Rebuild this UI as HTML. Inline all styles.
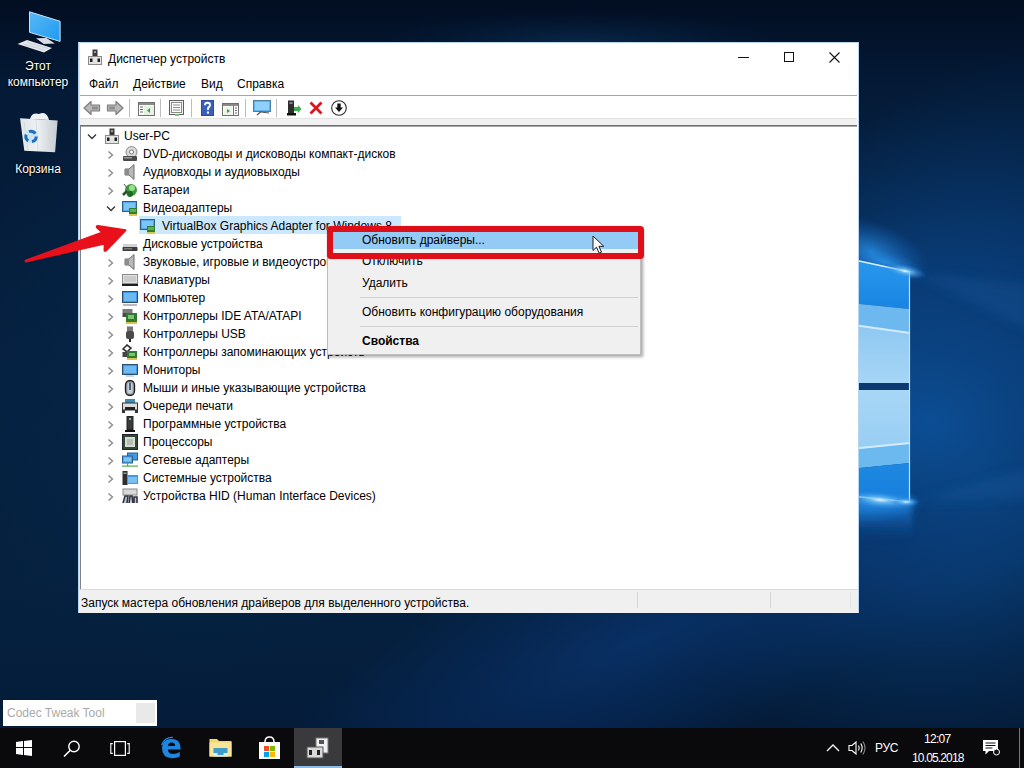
<!DOCTYPE html>
<html><head><meta charset="utf-8">
<style>
*{margin:0;padding:0;box-sizing:border-box}
html,body{width:1024px;height:768px;overflow:hidden;background:#04122a;font-family:"Liberation Sans",sans-serif;font-size:12px;color:#000}
.abs{position:absolute}
#desk{position:absolute;left:0;top:0;width:1024px;height:728px;overflow:hidden}
.dtxt{position:absolute;color:#fff;font-size:12px;text-align:center;line-height:15px;text-shadow:0 0 2px #000,0 1px 1px #000}
.tt{position:absolute;height:18px;line-height:18px;white-space:nowrap;color:#000}
#win{position:absolute;left:78px;top:42px;width:781px;height:571px;background:#fff;border:1px solid #b8d4ee}
.mi{position:absolute;line-height:16px;white-space:nowrap}
.sep{position:absolute;width:1px;background:#bdbdbd}
#ctx{position:absolute;left:327px;top:228px;width:314px;height:127px;background:#f0f0f0;border:1px solid #bdbdbd;box-shadow:2px 2px 3px rgba(0,0,0,0.35)}
#taskbar{position:absolute;left:0;top:728px;width:1024px;height:40px;background:#0a0a0c}
.tb{position:absolute;color:#fff;white-space:nowrap}
</style></head><body>
<div id="desk">
<svg width="1024" height="728" viewBox="0 0 1024 728" style="position:absolute;left:0;top:0">
 <defs>
  <linearGradient id="bg" x1="0" y1="0" x2="0" y2="1">
   <stop offset="0" stop-color="#020e22"/>
   <stop offset="0.12" stop-color="#041a36"/>
   <stop offset="0.5" stop-color="#05203e"/>
   <stop offset="0.8" stop-color="#05213f"/>
   <stop offset="1" stop-color="#041c3a"/>
  </linearGradient>
  <radialGradient id="glow1" cx="930" cy="420" r="1" gradientUnits="userSpaceOnUse" gradientTransform="translate(930 420) scale(360 330) translate(-930 -420)">
   <stop offset="0" stop-color="#0c4f96" stop-opacity="1"/>
   <stop offset="0.5" stop-color="#0a4282" stop-opacity="0.7"/>
   <stop offset="1" stop-color="#06305f" stop-opacity="0"/>
  </radialGradient>
  <radialGradient id="glow2" cx="640" cy="640" r="1" gradientUnits="userSpaceOnUse" gradientTransform="translate(640 640) rotate(-22) scale(380 120) translate(-640 -640)">
   <stop offset="0" stop-color="#0a3672" stop-opacity="0.75"/>
   <stop offset="0.6" stop-color="#08306a" stop-opacity="0.35"/>
   <stop offset="1" stop-color="#08306a" stop-opacity="0"/>
  </radialGradient>
  <radialGradient id="glow3" cx="200" cy="380" r="1" gradientUnits="userSpaceOnUse" gradientTransform="translate(200 380) scale(260 300) translate(-200 -380)">
   <stop offset="0" stop-color="#062850" stop-opacity="0.7"/>
   <stop offset="1" stop-color="#062850" stop-opacity="0"/>
  </radialGradient>
  <radialGradient id="glow4" cx="1010" cy="260" r="1" gradientUnits="userSpaceOnUse" gradientTransform="translate(1010 260) rotate(-30) scale(260 200) translate(-1010 -260)">
   <stop offset="0" stop-color="#0a3f7e" stop-opacity="0.45"/>
   <stop offset="1" stop-color="#0a3f7e" stop-opacity="0"/>
  </radialGradient>
  <linearGradient id="pane1" x1="0" y1="261" x2="0" y2="382" gradientUnits="userSpaceOnUse">
   <stop offset="0" stop-color="#3aa2f2"/>
   <stop offset="0.35" stop-color="#1f8ae6"/>
   <stop offset="0.38" stop-color="#5cb0ee"/>
   <stop offset="0.52" stop-color="#78bff1"/>
   <stop offset="0.56" stop-color="#b8e0f8"/>
   <stop offset="0.6" stop-color="#92cbf3"/>
   <stop offset="1" stop-color="#a4d4f5"/>
  </linearGradient>
  <linearGradient id="pane2" x1="0" y1="389" x2="0" y2="503" gradientUnits="userSpaceOnUse">
   <stop offset="0" stop-color="#a6d5f5"/>
   <stop offset="0.45" stop-color="#98cdf3"/>
   <stop offset="0.5" stop-color="#c4e6fa"/>
   <stop offset="0.54" stop-color="#7cc0f0"/>
   <stop offset="0.7" stop-color="#5aacec"/>
   <stop offset="0.73" stop-color="#2c8ae2"/>
   <stop offset="1" stop-color="#1c7ed8"/>
  </linearGradient>
  <radialGradient id="cglow" cx="0.5" cy="0.5" r="0.5">
   <stop offset="0" stop-color="#e8f6ff" stop-opacity="1"/>
   <stop offset="0.25" stop-color="#7cc8fa" stop-opacity="0.8"/>
   <stop offset="1" stop-color="#1a7fe0" stop-opacity="0"/>
  </radialGradient>
  <radialGradient id="haze" cx="0.5" cy="0.5" r="0.5">
   <stop offset="0" stop-color="#2b9af0" stop-opacity="0.75"/>
   <stop offset="1" stop-color="#1a6fd0" stop-opacity="0"/>
  </radialGradient>
 </defs>
 <rect width="1024" height="728" fill="url(#bg)"/>
 <rect width="1024" height="728" fill="url(#glow3)"/>
 <rect width="1024" height="728" fill="url(#glow1)"/>
 <rect width="1024" height="728" fill="url(#glow4)"/>
 <rect width="1024" height="728" fill="url(#glow2)"/>
 <ellipse cx="580" cy="42" rx="200" ry="30" fill="url(#haze)" opacity="0.18"/>
 <ellipse cx="872" cy="252" rx="60" ry="30" fill="url(#haze)" transform="rotate(20 872 252)"/>
 <ellipse cx="885" cy="262" rx="40" ry="12" fill="url(#haze)" transform="rotate(14 885 262)"/>
 <ellipse cx="875" cy="505" rx="50" ry="18" fill="url(#haze)" transform="rotate(-5 875 505)"/>
 <filter id="blur3" x="-20%" y="-20%" width="140%" height="140%"><feGaussianBlur stdDeviation="3"/></filter>
 <filter id="blur6" x="-20%" y="-50%" width="140%" height="200%"><feGaussianBlur stdDeviation="6"/></filter>
 <g filter="url(#blur6)">
 <polygon points="910,272 1030,284 1030,330" fill="#3a8fe0" opacity="0.10"/>
 <polygon points="910,502 1030,468 1030,498" fill="#3a8fe0" opacity="0.10"/>
 </g>
 <!-- logo panes -->
 <defs>
  <linearGradient id="pA" x1="0" y1="259" x2="0" y2="310" gradientUnits="userSpaceOnUse"><stop offset="0" stop-color="#2a98ee"/><stop offset="1" stop-color="#1884e2"/></linearGradient>
  <linearGradient id="pC" x1="0" y1="325" x2="0" y2="382" gradientUnits="userSpaceOnUse"><stop offset="0" stop-color="#8ec8f2"/><stop offset="1" stop-color="#a6d5f5"/></linearGradient>
  <linearGradient id="qA" x1="0" y1="389" x2="0" y2="449" gradientUnits="userSpaceOnUse"><stop offset="0" stop-color="#a8d7f6"/><stop offset="1" stop-color="#98cef3"/></linearGradient>
  <linearGradient id="qC" x1="0" y1="462" x2="0" y2="502" gradientUnits="userSpaceOnUse"><stop offset="0" stop-color="#1e88e2"/><stop offset="1" stop-color="#177fdc"/></linearGradient>
 </defs>
 <polygon points="850,259 910,272 910,309 850,303" fill="url(#pA)"/>
 <polygon points="850,303 910,309 910,333 850,324" fill="#6cb8ef"/>
 <polygon points="850,324 910,333 910,383 850,383" fill="url(#pC)"/>
 <line x1="850" y1="324.5" x2="910" y2="333" stroke="#d2ecfd" stroke-width="1.8"/>
 <rect x="850" y="383" width="60" height="7" fill="#0a3a70"/>
 <polygon points="850,390 910,390 910,443 850,449" fill="url(#qA)"/>
 <polygon points="850,449 910,443 910,463 850,469" fill="#6cb9ef"/>
 <line x1="850" y1="449" x2="910" y2="443" stroke="#d2ecfd" stroke-width="1.8"/>
 <polygon points="850,469 910,463 910,502 850,496" fill="url(#qC)"/>
 <defs><linearGradient id="below" x1="0" y1="496" x2="0" y2="540" gradientUnits="userSpaceOnUse"><stop offset="0" stop-color="#2a94ea" stop-opacity="0.95"/><stop offset="0.4" stop-color="#1a78d0" stop-opacity="0.6"/><stop offset="1" stop-color="#0d4a90" stop-opacity="0"/></linearGradient></defs>
 <rect x="846" y="498" width="66" height="44" fill="url(#below)" filter="url(#blur3)"/>
 <line x1="850" y1="259" x2="910" y2="272" stroke="#d9f1ff" stroke-width="1.6"/>
 <line x1="850" y1="496" x2="910" y2="502" stroke="#b9e2ff" stroke-width="1.4"/>
 <line x1="909.5" y1="271" x2="909.5" y2="503" stroke="#bfe4ff" stroke-width="1.2"/>
 <ellipse cx="905" cy="271" rx="22" ry="7" fill="url(#cglow)" transform="rotate(12 905 271)"/>
 <ellipse cx="880" cy="500" rx="38" ry="9" fill="url(#cglow)" transform="rotate(6 880 500)"/>
 <ellipse cx="906" cy="502" rx="14" ry="5" fill="url(#cglow)"/>
</svg>
</div>

<!-- Desktop icons -->
<svg class="abs" style="left:14px;top:8px" width="50" height="48" viewBox="0 0 50 48">
 <defs><linearGradient id="scr" x1="0" y1="0" x2="1" y2="1"><stop offset="0" stop-color="#5ab8f6"/><stop offset="1" stop-color="#1e9af0"/></linearGradient></defs>
 <polygon points="15.5,3.8 46.1,13.3 46.1,33.4 15.5,24.3" fill="url(#scr)" stroke="#c4e6fb" stroke-width="1"/>
 <polygon points="22,30.2 32.4,29.9 40.9,35.4 29.8,36" fill="#d9dde3"/>
 <polygon points="3.5,36 13,32 38,40 30,44.5" fill="#e4e8ec"/>
 <path d="M9 36 L31 42 M13 34.5 L34 40.5" stroke="#b8bec6" stroke-width="0.6"/>
</svg>
<div class="dtxt" style="left:0;top:58px;width:76px;line-height:16px">Этот<br>компьютер</div>
<svg class="abs" style="left:18px;top:110px" width="44" height="46" viewBox="0 0 44 46">
 <defs><linearGradient id="binG" x1="0" y1="0" x2="1" y2="0"><stop offset="0" stop-color="#dfe4e8"/><stop offset="0.45" stop-color="#eef1f3"/><stop offset="1" stop-color="#c6ccd2"/></linearGradient></defs>
 <path d="M12 9 Q14 2 21 4 Q27 1 30 7 L31 10 Z" fill="#eef2f5"/>
 <polygon points="2,8.2 39.6,10.4 37.1,42.2 6.3,40.8" fill="url(#binG)"/>
 <path d="M6 12 L10 40 M30 12 L32 40 M18 10 L20 41" stroke="#d2d8dd" stroke-width="0.8"/>
 <circle cx="13" cy="26.5" r="7" fill="#bfe0f6" opacity="0.7"/>
 <circle cx="13" cy="26.5" r="5.2" fill="none" stroke="#1d6fbd" stroke-width="3" stroke-dasharray="7 3.9"/>
</svg>
<div class="dtxt" style="left:0;top:162px;width:76px">Корзина</div>

<!-- Device manager window -->
<div id="win"></div>

<!-- title -->
<svg class="abs" style="left:88px;top:49px" width="14" height="16" viewBox="0 0 14 16">
 <rect x="4.5" y="0.5" width="5" height="7" fill="#3b3b3b"/><rect x="6" y="2" width="2" height="2" fill="#999"/>
 <rect x="0.5" y="7.5" width="13" height="8" fill="#e4e4e4" stroke="#8a8a8a"/>
 <rect x="2" y="9.5" width="2.5" height="3.5" fill="#1e1e1e"/><rect x="9.5" y="9.5" width="2.5" height="3.5" fill="#1e1e1e"/>
</svg>
<div class="abs" style="left:108px;top:51px;line-height:16px;white-space:nowrap">Диспетчер устройств</div>
<div class="abs" style="left:738px;top:57px;width:11px;height:1px;background:#111"></div>
<div class="abs" style="left:784px;top:52px;width:10px;height:10px;border:1px solid #111"></div>
<svg class="abs" style="left:829px;top:52px" width="12" height="12" viewBox="0 0 12 12"><path d="M0.5 0.5 L10.5 10.5 M10.5 0.5 L0.5 10.5" stroke="#111" stroke-width="1.1"/></svg>
<!-- menu -->
<div class="mi" style="left:89px;top:76px">Файл</div>
<div class="mi" style="left:133px;top:76px">Действие</div>
<div class="mi" style="left:201px;top:76px">Вид</div>
<div class="mi" style="left:237px;top:76px">Справка</div>
<div class="abs" style="left:79px;top:95px;width:778px;height:1px;background:#a6a6a6"></div>
<!-- toolbar -->
<div class="abs" style="left:79px;top:96px;width:779px;height:23px;background:#fff"></div>
<div class="abs" style="left:79px;top:118px;width:778px;height:1px;background:#e2e2e2"></div>
<div class="abs" style="left:79px;top:119px;width:778px;height:6px;background:#f1f1f1"></div>
<div class="abs" style="left:79px;top:125px;width:778px;height:1px;background:#6e6e6e"></div>
<div class="abs" style="left:79px;top:126px;width:778px;height:1px;background:#a8a8a8"></div>

<svg class="abs" style="left:83px;top:100px" width="18" height="16" viewBox="0 0 18 16"><path d="M1 8 L8 1.5 L8 5 L16.5 5 L16.5 11 L8 11 L8 14.5 Z" fill="#b9b9b9" stroke="#7d7d7d" stroke-width="1.2" stroke-linejoin="round"/><rect x="9" y="6.5" width="6" height="3" fill="#8f8f8f"/></svg>
<svg class="abs" style="left:106px;top:100px" width="18" height="16" viewBox="0 0 18 16"><path d="M17 8 L10 1.5 L10 5 L1.5 5 L1.5 11 L10 11 L10 14.5 Z" fill="#b9b9b9" stroke="#7d7d7d" stroke-width="1.2" stroke-linejoin="round"/><rect x="3" y="6.5" width="6" height="3" fill="#8f8f8f"/></svg>
<div class="sep" style="left:129px;top:99px;height:18px"></div>
<svg class="abs" style="left:138px;top:102px" width="17" height="14" viewBox="0 0 17 14"><rect x="0.5" y="0.5" width="16" height="13" fill="#fff" stroke="#6f6f6f"/><rect x="1" y="1" width="15" height="2" fill="#8a8a8a"/><path d="M2 5h3M2 7.5h3M2 10h3" stroke="#666" stroke-width="1"/><rect x="6" y="4" width="10" height="9" fill="#e7f1e1"/><path d="M12 6 L9 8.5 L12 11 Z" fill="#3f9a3f"/></svg>
<div class="sep" style="left:160px;top:99px;height:18px"></div>
<svg class="abs" style="left:169px;top:100px" width="15" height="16" viewBox="0 0 15 16"><rect x="0.5" y="0.5" width="14" height="14" fill="#f4f4f4" stroke="#5f5f5f"/><rect x="2.5" y="2.5" width="10" height="10" fill="#fff" stroke="#8a8a8a"/><path d="M4 5h7M4 7.5h7M4 10h7" stroke="#8a8a8a" stroke-width="1"/><rect x="6" y="14" width="4" height="2" fill="#7bc47b"/></svg>
<div class="sep" style="left:191px;top:99px;height:18px"></div>
<svg class="abs" style="left:201px;top:100px" width="13" height="16" viewBox="0 0 13 16"><rect x="0" y="0" width="13" height="16" fill="#2d4c9e"/><rect x="1" y="1" width="11" height="14" fill="#3a5fb8"/><path d="M4 5.2 Q4 2.8 6.5 2.8 Q9 2.8 9 5 Q9 6.6 7.2 7.6 L7 10" fill="none" stroke="#fff" stroke-width="1.9"/><rect x="5.9" y="11.5" width="2.1" height="2.1" fill="#fff"/></svg>
<svg class="abs" style="left:222px;top:103px" width="17" height="13" viewBox="0 0 17 13"><rect x="0.5" y="0.5" width="16" height="12" fill="#fff" stroke="#6f6f6f"/><rect x="1" y="1" width="15" height="2" fill="#8a8a8a"/><rect x="11" y="3" width="1" height="9" fill="#6f6f6f"/><path d="M13 5h2M13 7.5h2M13 10h2" stroke="#666"/><rect x="2" y="4" width="8" height="8" fill="#eef4ea"/><path d="M5 6 L8 8 L5 10 Z" fill="#3f9a3f"/></svg>
<div class="sep" style="left:245px;top:99px;height:18px"></div>
<svg class="abs" style="left:253px;top:100px" width="18" height="16" viewBox="0 0 18 16"><rect x="0.5" y="0.5" width="17" height="11" fill="#5fb4f0" stroke="#4a7fa8"/><rect x="2" y="2" width="14" height="8" fill="#8fd0fa"/><path d="M8 11.5 L4 15 M8 12 L16 13" stroke="#555" stroke-width="1.2"/></svg>
<div class="sep" style="left:276px;top:99px;height:18px"></div>
<svg class="abs" style="left:287px;top:100px" width="15" height="16" viewBox="0 0 15 16"><rect x="1" y="0.5" width="6" height="13" fill="#2e2e2e"/><rect x="2.5" y="2" width="3" height="2" fill="#888"/><rect x="0" y="13" width="9" height="2.5" fill="#111"/><path d="M7 7 L11 7 L11 5 L14.5 9 L11 13 L11 11 L7 11 Z" fill="#3fae4f"/></svg>
<svg class="abs" style="left:309px;top:101px" width="14" height="14" viewBox="0 0 14 14"><path d="M1.5 1.5 L12.5 12.5 M12.5 1.5 L1.5 12.5" stroke="#e0141e" stroke-width="2.8"/></svg>
<svg class="abs" style="left:331px;top:100px" width="16" height="16" viewBox="0 0 16 16"><circle cx="8" cy="8" r="7.3" fill="#fff" stroke="#2a2a2a" stroke-width="1.1"/><path d="M6.3 3.5 L9.7 3.5 L9.7 7.5 L12 7.5 L8 12 L4 7.5 L6.3 7.5 Z" fill="#111"/></svg>

<!-- tree borders -->
<div class="abs" style="left:79px;top:42px;width:1px;height:571px;background:#dbe9f6"></div>
<div class="abs" style="left:80px;top:126px;width:1px;height:464px;background:#828282"></div>
<div class="abs" style="left:79px;top:589px;width:779px;height:1px;background:#dadada"></div>
<!-- status -->
<div class="abs" style="left:79px;top:590px;width:779px;height:23px;background:#f0f0f0"></div>
<div class="abs" style="left:637px;top:592px;width:1px;height:16px;background:#d5d5d5"></div>
<div class="abs" style="left:770px;top:592px;width:1px;height:16px;background:#d5d5d5"></div>
<div class="abs" style="left:850px;top:592px;width:1px;height:16px;background:#e2e2e2"></div>
<div class="abs" style="left:81px;top:595px;line-height:16px;white-space:nowrap">Запуск мастера обновления драйверов для выделенного устройства.</div>

<svg class="abs" style="left:87px;top:133px" width="10" height="8" viewBox="0 0 10 8"><path d="M1 1.5 L5 5.5 L9 1.5" fill="none" stroke="#333" stroke-width="1.3"/></svg>
<svg class="abs" style="left:103px;top:128px" width="16" height="16" viewBox="0 0 16 16"><rect x="6.5" y="0.5" width="5" height="7" fill="#3b3b3b"/><rect x="8" y="2" width="2" height="2" fill="#999"/><rect x="2.5" y="7.5" width="13" height="8" fill="#e4e4e4" stroke="#8a8a8a"/><rect x="4" y="9.5" width="2.5" height="3.5" fill="#1e1e1e"/><rect x="11.5" y="9.5" width="2.5" height="3.5" fill="#1e1e1e"/></svg>
<div class="tt" style="left:124px;top:127px">User-PC</div>
<svg class="abs" style="left:107px;top:150px" width="8" height="10" viewBox="0 0 8 10"><path d="M1.5 1.5 L5.5 5 L1.5 8.5" fill="none" stroke="#8c8c8c" stroke-width="1.4"/></svg>
<svg class="abs" style="left:122px;top:146px" width="16" height="16" viewBox="0 0 16 16"><circle cx="9.5" cy="6" r="5.5" fill="#d9d9d9" stroke="#8a8a8a"/><circle cx="9.5" cy="6" r="2" fill="#fff" stroke="#777"/><rect x="1" y="10" width="14" height="5" rx="1" fill="#4a4a4a"/><rect x="2" y="11" width="8" height="1.5" fill="#9a9a9a"/></svg>
<div class="tt" style="left:143px;top:145px">DVD-дисководы и дисководы компакт-дисков</div>
<svg class="abs" style="left:107px;top:168px" width="8" height="10" viewBox="0 0 8 10"><path d="M1.5 1.5 L5.5 5 L1.5 8.5" fill="none" stroke="#8c8c8c" stroke-width="1.4"/></svg>
<svg class="abs" style="left:122px;top:164px" width="16" height="16" viewBox="0 0 16 16"><path d="M3 5 L7 5 L12 0.5 L12 15.5 L7 11 L3 11 Z" fill="#b9b9b9" stroke="#6a6a6a"/><rect x="3" y="5" width="4" height="6" fill="#8c8c8c"/></svg>
<div class="tt" style="left:143px;top:163px">Аудиовходы и аудиовыходы</div>
<svg class="abs" style="left:107px;top:186px" width="8" height="10" viewBox="0 0 8 10"><path d="M1.5 1.5 L5.5 5 L1.5 8.5" fill="none" stroke="#8c8c8c" stroke-width="1.4"/></svg>
<svg class="abs" style="left:122px;top:182px" width="16" height="16" viewBox="0 0 16 16"><circle cx="9" cy="8" r="6" fill="#3c9a3c"/><circle cx="10" cy="6" r="3" fill="#9edc8e"/><path d="M1 13 L5 9" stroke="#2b4f2b" stroke-width="2.5"/><path d="M2 2 L5 6" stroke="#555" stroke-width="1"/><circle cx="8" cy="12" r="3" fill="#1e6a1e"/></svg>
<div class="tt" style="left:143px;top:181px">Батареи</div>
<svg class="abs" style="left:106px;top:205px" width="10" height="8" viewBox="0 0 10 8"><path d="M1 1.5 L5 5.5 L9 1.5" fill="none" stroke="#333" stroke-width="1.3"/></svg>
<svg class="abs" style="left:122px;top:200px" width="16" height="16" viewBox="0 0 16 16"><rect x="0.5" y="1.5" width="14" height="10" fill="#54a8ea" stroke="#2a5f8f"/><rect x="2" y="3" width="11" height="7" fill="#7cc4f6"/><rect x="7" y="8" width="8" height="6" fill="#2e7d32"/><rect x="8" y="9" width="6" height="3" fill="#58b34d"/><rect x="7" y="14" width="8" height="2" fill="#d9c84a"/></svg>
<div class="tt" style="left:143px;top:199px">Видеоадаптеры</div>
<div class="abs" style="left:139px;top:216px;width:262px;height:18px;background:#cce8ff"></div>
<svg class="abs" style="left:140px;top:218px" width="16" height="16" viewBox="0 0 16 16"><rect x="0.5" y="1.5" width="14" height="10" fill="#54a8ea" stroke="#2a5f8f"/><rect x="2" y="3" width="11" height="7" fill="#7cc4f6"/><rect x="7" y="8" width="8" height="6" fill="#2e7d32"/><rect x="8" y="9" width="6" height="3" fill="#58b34d"/><rect x="7" y="14" width="8" height="2" fill="#d9c84a"/></svg>
<div class="tt" style="left:162px;top:217px">VirtualBox Graphics Adapter for Windows 8</div>
<svg class="abs" style="left:122px;top:236px" width="16" height="16" viewBox="0 0 16 16"><rect x="1" y="8" width="14" height="3" fill="#d2d2d2"/><rect x="0.5" y="11" width="15" height="4" rx="0.8" fill="#3c3c3c"/><rect x="2" y="12.2" width="8" height="1.2" fill="#8a8a8a"/></svg>
<div class="tt" style="left:143px;top:235px">Дисковые устройства</div>
<svg class="abs" style="left:107px;top:258px" width="8" height="10" viewBox="0 0 8 10"><path d="M1.5 1.5 L5.5 5 L1.5 8.5" fill="none" stroke="#8c8c8c" stroke-width="1.4"/></svg>
<svg class="abs" style="left:122px;top:254px" width="16" height="16" viewBox="0 0 16 16"><path d="M3 5 L7 5 L12 0.5 L12 15.5 L7 11 L3 11 Z" fill="#b9b9b9" stroke="#6a6a6a"/><rect x="3" y="5" width="4" height="6" fill="#8c8c8c"/></svg>
<div class="tt" style="left:143px;top:253px">Звуковые, игровые и видеоустройства</div>
<svg class="abs" style="left:107px;top:276px" width="8" height="10" viewBox="0 0 8 10"><path d="M1.5 1.5 L5.5 5 L1.5 8.5" fill="none" stroke="#8c8c8c" stroke-width="1.4"/></svg>
<svg class="abs" style="left:122px;top:272px" width="16" height="16" viewBox="0 0 16 16"><rect x="0.5" y="2.5" width="15" height="9" fill="#e2e2e2" stroke="#8a8a8a"/><path d="M2 5h12M2 7h12M2 9h12" stroke="#a8a8a8" stroke-width="0.8"/><rect x="0" y="12" width="16" height="2" fill="#1f1f1f"/></svg>
<div class="tt" style="left:143px;top:271px">Клавиатуры</div>
<svg class="abs" style="left:107px;top:294px" width="8" height="10" viewBox="0 0 8 10"><path d="M1.5 1.5 L5.5 5 L1.5 8.5" fill="none" stroke="#8c8c8c" stroke-width="1.4"/></svg>
<svg class="abs" style="left:122px;top:290px" width="16" height="16" viewBox="0 0 16 16"><rect x="0.5" y="1.5" width="15" height="11" fill="#3f9ae6" stroke="#2a4f70"/><rect x="2" y="3" width="12" height="8" fill="#6bbaf3"/><rect x="1" y="14.5" width="14" height="1" fill="#777"/></svg>
<div class="tt" style="left:143px;top:289px">Компьютер</div>
<svg class="abs" style="left:107px;top:312px" width="8" height="10" viewBox="0 0 8 10"><path d="M1.5 1.5 L5.5 5 L1.5 8.5" fill="none" stroke="#8c8c8c" stroke-width="1.4"/></svg>
<svg class="abs" style="left:122px;top:308px" width="16" height="16" viewBox="0 0 16 16"><rect x="0.5" y="1" width="10" height="4" fill="#7a7a7a"/><rect x="0.5" y="5" width="4" height="4" fill="#4a4a4a"/><rect x="4" y="5" width="11" height="9" fill="#2f7a33"/><rect x="6" y="7" width="6" height="4" fill="#79c46e"/><rect x="4" y="14" width="11" height="2" fill="#d8c44a"/></svg>
<div class="tt" style="left:143px;top:307px">Контроллеры IDE ATA/ATAPI</div>
<svg class="abs" style="left:107px;top:330px" width="8" height="10" viewBox="0 0 8 10"><path d="M1.5 1.5 L5.5 5 L1.5 8.5" fill="none" stroke="#8c8c8c" stroke-width="1.4"/></svg>
<svg class="abs" style="left:122px;top:326px" width="16" height="16" viewBox="0 0 16 16"><rect x="5" y="0.5" width="6" height="5" fill="#777"/><rect x="4" y="5" width="8" height="8" rx="2" fill="#4a4a4a"/><rect x="7" y="13" width="2" height="3" fill="#222"/></svg>
<div class="tt" style="left:143px;top:325px">Контроллеры USB</div>
<svg class="abs" style="left:107px;top:348px" width="8" height="10" viewBox="0 0 8 10"><path d="M1.5 1.5 L5.5 5 L1.5 8.5" fill="none" stroke="#8c8c8c" stroke-width="1.4"/></svg>
<svg class="abs" style="left:122px;top:344px" width="16" height="16" viewBox="0 0 16 16"><path d="M1 5 L5 1 L9 4 L5 8 Z" fill="none" stroke="#333" stroke-width="1.6"/><rect x="0.5" y="8" width="5" height="5" fill="#444"/><rect x="5" y="7" width="10" height="7" fill="#2f7a33"/><rect x="7" y="9" width="6" height="3" fill="#79c46e"/><rect x="5" y="14" width="10" height="2" fill="#d8c44a"/></svg>
<div class="tt" style="left:143px;top:343px">Контроллеры запоминающих устройств</div>
<svg class="abs" style="left:107px;top:366px" width="8" height="10" viewBox="0 0 8 10"><path d="M1.5 1.5 L5.5 5 L1.5 8.5" fill="none" stroke="#8c8c8c" stroke-width="1.4"/></svg>
<svg class="abs" style="left:122px;top:362px" width="16" height="16" viewBox="0 0 16 16"><rect x="0.5" y="2.5" width="15" height="10" fill="#3f9ae6" stroke="#2a4f70"/><rect x="2" y="4" width="12" height="7" fill="#6bbaf3"/><rect x="4" y="13.5" width="8" height="1" fill="#9ab"/></svg>
<div class="tt" style="left:143px;top:361px">Мониторы</div>
<svg class="abs" style="left:107px;top:384px" width="8" height="10" viewBox="0 0 8 10"><path d="M1.5 1.5 L5.5 5 L1.5 8.5" fill="none" stroke="#8c8c8c" stroke-width="1.4"/></svg>
<svg class="abs" style="left:122px;top:380px" width="16" height="16" viewBox="0 0 16 16"><rect x="3.5" y="0.5" width="9" height="15" rx="4.5" fill="#9aa3ad" stroke="#1a1a1a" stroke-width="1.3"/><rect x="5.5" y="2.5" width="5" height="11" rx="2.5" fill="#c8d0d8"/><path d="M8 2.5 L8 10" stroke="#2d4a72" stroke-width="1.6"/></svg>
<div class="tt" style="left:143px;top:379px">Мыши и иные указывающие устройства</div>
<svg class="abs" style="left:107px;top:402px" width="8" height="10" viewBox="0 0 8 10"><path d="M1.5 1.5 L5.5 5 L1.5 8.5" fill="none" stroke="#8c8c8c" stroke-width="1.4"/></svg>
<svg class="abs" style="left:122px;top:398px" width="16" height="16" viewBox="0 0 16 16"><rect x="3" y="1" width="10" height="4" fill="#3a8fb8"/><rect x="0.5" y="5" width="15" height="7" fill="#dcdcdc" stroke="#333"/><rect x="3" y="9" width="10" height="3" fill="#222"/><rect x="0" y="12" width="3" height="3" fill="#333"/><rect x="13" y="12" width="3" height="3" fill="#333"/></svg>
<div class="tt" style="left:143px;top:397px">Очереди печати</div>
<svg class="abs" style="left:107px;top:420px" width="8" height="10" viewBox="0 0 8 10"><path d="M1.5 1.5 L5.5 5 L1.5 8.5" fill="none" stroke="#8c8c8c" stroke-width="1.4"/></svg>
<svg class="abs" style="left:122px;top:416px" width="16" height="16" viewBox="0 0 16 16"><rect x="5" y="0.5" width="6" height="13" fill="#3a3a3a" stroke="#222"/><rect x="7" y="2" width="2" height="2" fill="#8ab48a"/><rect x="3" y="14" width="10" height="2" fill="#111"/></svg>
<div class="tt" style="left:143px;top:415px">Программные устройства</div>
<svg class="abs" style="left:107px;top:438px" width="8" height="10" viewBox="0 0 8 10"><path d="M1.5 1.5 L5.5 5 L1.5 8.5" fill="none" stroke="#8c8c8c" stroke-width="1.4"/></svg>
<svg class="abs" style="left:122px;top:434px" width="16" height="16" viewBox="0 0 16 16"><rect x="0.5" y="0.5" width="15" height="15" fill="#2f4a2f" stroke="#223"/><rect x="3" y="3" width="10" height="10" fill="#d8dcd6"/><rect x="5" y="5" width="6" height="6" fill="#b8bdb4"/></svg>
<div class="tt" style="left:143px;top:433px">Процессоры</div>
<svg class="abs" style="left:107px;top:456px" width="8" height="10" viewBox="0 0 8 10"><path d="M1.5 1.5 L5.5 5 L1.5 8.5" fill="none" stroke="#8c8c8c" stroke-width="1.4"/></svg>
<svg class="abs" style="left:122px;top:452px" width="16" height="16" viewBox="0 0 16 16"><rect x="5.5" y="1" width="10" height="7" fill="#3f9ae6" stroke="#2a5f8f"/><rect x="0.5" y="4" width="10" height="7" fill="#4ba6ee" stroke="#2a5f8f"/><rect x="2" y="5.5" width="7" height="4" fill="#7cc4f6"/><rect x="0" y="13.5" width="16" height="1.2" fill="#4caf50"/><rect x="5" y="11" width="1.2" height="3" fill="#4caf50"/></svg>
<div class="tt" style="left:143px;top:451px">Сетевые адаптеры</div>
<svg class="abs" style="left:107px;top:474px" width="8" height="10" viewBox="0 0 8 10"><path d="M1.5 1.5 L5.5 5 L1.5 8.5" fill="none" stroke="#8c8c8c" stroke-width="1.4"/></svg>
<svg class="abs" style="left:122px;top:470px" width="16" height="16" viewBox="0 0 16 16"><rect x="0.5" y="1" width="5" height="14" fill="#2f2f2f"/><rect x="1.5" y="2.5" width="3" height="1.5" fill="#999"/><rect x="5" y="5" width="11" height="9" fill="#3f9ae6"/><rect x="6" y="7" width="9" height="6" fill="#77c0f4"/></svg>
<div class="tt" style="left:143px;top:469px">Системные устройства</div>
<svg class="abs" style="left:107px;top:492px" width="8" height="10" viewBox="0 0 8 10"><path d="M1.5 1.5 L5.5 5 L1.5 8.5" fill="none" stroke="#8c8c8c" stroke-width="1.4"/></svg>
<svg class="abs" style="left:122px;top:488px" width="16" height="16" viewBox="0 0 16 16"><rect x="1" y="1" width="14" height="6" fill="#d8d8d8" stroke="#8a8a8a"/><path d="M1 15 L3 8 L6 8 L5 15 M7 15 L8 8 L10 8 L11 15 M12 15 L12 9 L15 9 L15 15" stroke="#334" stroke-width="1.6" fill="#b8c4d0"/></svg>
<div class="tt" style="left:143px;top:487px">Устройства HID (Human Interface Devices)</div>

<div id="ctx"></div>
<div class="abs" style="left:333px;top:232px;width:305px;height:17px;background:#93caf6"></div>
<div class="mi" style="left:362px;top:232px">Обновить драйверы...</div>
<div class="mi" style="left:362px;top:253px">Отключить</div>
<div class="mi" style="left:362px;top:275px">Удалить</div>
<div class="abs" style="left:360px;top:297px;width:278px;height:1px;background:#d0d0d0"></div>
<div class="mi" style="left:362px;top:304px">Обновить конфигурацию оборудования</div>
<div class="abs" style="left:360px;top:326px;width:278px;height:1px;background:#d0d0d0"></div>
<div class="mi" style="left:362px;top:333px;font-weight:bold">Свойства</div>
<div class="abs" style="left:327px;top:226px;width:317px;height:33px;border:6px solid #de0f19;border-radius:4px;box-shadow:0 0 1px rgba(120,0,0,0.6)"></div>
<svg class="abs" style="left:592px;top:235px" width="14" height="20" viewBox="0 0 14 20"><path d="M1 1 L1 15.5 L4.5 12.2 L7.2 18.2 L9.5 17.2 L6.9 11.3 L11.8 11.3 Z" fill="#fff" stroke="#1a1a1a" stroke-width="1" stroke-linejoin="round"/></svg>


<svg class="abs" style="left:20px;top:218px" width="120" height="50" viewBox="0 0 120 50">
 <path d="M5.5 42.8 L82.5 14.5 L77 9.5 Q76 8 78 8 L105.5 12.3 L86 32.5 Q84.5 33.5 84.5 32 L84.8 25.5 L6 43.6 Z" fill="#e8101a" stroke="#e8101a" stroke-width="2" stroke-linejoin="round"/>
</svg>


<div class="abs" style="left:3px;top:700px;width:154px;height:26px;background:#fff"></div>
<div class="abs" style="left:7px;top:705px;line-height:16px;color:#a9a9a9;font-size:12px;white-space:nowrap">Codec Tweak Tool</div>
<div class="abs" style="left:136px;top:703px;width:19px;height:20px;background:#e9e9e9"></div>
<div id="taskbar"></div>
<svg class="abs" style="left:16px;top:740px" width="16" height="16" viewBox="0 0 16 16"><path d="M0 2 L7 1 L7 7 L0 7 Z M8 0.9 L16 0 L16 7 L8 7 Z M0 8 L7 8 L7 15 L0 14 Z M8 8 L16 8 L16 16 L8 15.1 Z" fill="#fff"/></svg>
<svg class="abs" style="left:63px;top:740px" width="18" height="18" viewBox="0 0 18 18"><circle cx="11" cy="6.5" r="5.2" fill="none" stroke="#fff" stroke-width="1.4"/><path d="M7.3 10.2 L1 16.5" stroke="#fff" stroke-width="1.6"/></svg>
<svg class="abs" style="left:109px;top:740px" width="22" height="17" viewBox="0 0 22 17"><rect x="5.6" y="1.6" width="10.8" height="13.8" fill="none" stroke="#fff" stroke-width="1.2"/><path d="M3.8 3.6 L1.8 3.6 L1.8 13.4 L3.8 13.4 M18.2 3.6 L20.2 3.6 L20.2 13.4 L18.2 13.4" fill="none" stroke="#fff" stroke-width="1.1"/></svg>
<svg class="abs" style="left:160px;top:736px" width="23" height="23" viewBox="0 0 23 23"><path d="M2 12 Q2 3 11.5 3 Q20.5 3 20.5 12 L20.5 13.5 L7.8 13.5 Q8.3 18 13 18 Q16.5 18 19.8 16 L19.8 20.5 Q16.5 22.2 12.5 22.2 Q2 22.2 2 12 Z M7.9 10 L15.2 10 Q15 6.6 11.6 6.6 Q8.5 6.6 7.9 10 Z" fill="#1f86e0"/><path d="M1.5 9 Q5 1 13 1.5" fill="none" stroke="#1f86e0" stroke-width="1.3"/></svg>
<svg class="abs" style="left:209px;top:738px" width="23" height="19" viewBox="0 0 23 19"><path d="M0.5 1 L8 1 L10 3 L22.5 3 L22.5 18.5 L0.5 18.5 Z" fill="#f3d66e"/><rect x="0.5" y="4.5" width="22" height="14" fill="#f8e59a"/><rect x="4.5" y="10" width="14" height="5" fill="#3f9cc8"/><rect x="4.5" y="15" width="14" height="3.5" fill="#d9eef2"/><rect x="8.5" y="15" width="6" height="2" fill="#3f9cc8"/></svg>
<svg class="abs" style="left:258px;top:736px" width="23" height="24" viewBox="0 0 23 24"><path d="M7 6 Q7 1 11.5 1 Q16 1 16 6" fill="none" stroke="#fff" stroke-width="1.5"/><rect x="1" y="6" width="21" height="17" fill="#fff"/><rect x="6" y="10" width="5" height="5" fill="#f25022"/><rect x="12" y="10" width="5" height="5" fill="#7fba00"/><rect x="6" y="16" width="5" height="5" fill="#00a4ef"/><rect x="12" y="16" width="5" height="5" fill="#ffb900"/></svg>
<div class="abs" style="left:294px;top:728px;width:48px;height:40px;background:#3a3a3c"></div>
<div class="abs" style="left:294px;top:766px;width:48px;height:2px;background:#8fb9e6"></div>
<svg class="abs" style="left:306px;top:737px" width="24" height="22" viewBox="0 0 24 22"><rect x="10" y="1" width="12" height="15" fill="#f2f2f2" stroke="#777"/><rect x="13" y="3" width="5" height="4" fill="#555"/><rect x="1" y="10" width="16" height="11" fill="#d8d8d8" stroke="#555"/><rect x="3" y="13" width="3" height="5" fill="#222"/><rect x="11" y="13" width="3" height="5" fill="#222"/></svg>
<svg class="abs" style="left:826px;top:743px" width="14" height="9" viewBox="0 0 14 9"><path d="M1 8 L7 2 L13 8" fill="none" stroke="#fff" stroke-width="1.3"/></svg>
<svg class="abs" style="left:848px;top:740px" width="18" height="16" viewBox="0 0 18 16"><path d="M1 5.5 L4 5.5 L8 2 L8 14 L4 10.5 L1 10.5 Z" fill="none" stroke="#fff" stroke-width="1.1"/><path d="M10.5 5.5 Q12 8 10.5 10.5 M12.8 3.5 Q15.5 8 12.8 12.5" fill="none" stroke="#fff" stroke-width="1.1"/><path d="M15 1.5 Q19 8 15 14.5" fill="none" stroke="#888" stroke-width="1.1"/></svg>
<div class="tb" style="left:875px;top:741px;line-height:14px;font-size:12px;letter-spacing:-0.3px">РУС</div>
<div class="tb" style="left:924px;top:732px;line-height:14px;font-size:12px;letter-spacing:-0.7px">12:07</div>
<div class="tb" style="left:912px;top:751px;line-height:14px;font-size:12px;letter-spacing:-0.85px">10.05.2018</div>
<svg class="abs" style="left:982px;top:739px" width="18" height="17" viewBox="0 0 18 17"><path d="M1 1 L16 1 L16 12 L7 12 L3.5 15.5 L3.5 12 L1 12 Z" fill="#fff"/><path d="M3.5 4h10M3.5 6.5h10M3.5 9h7" stroke="#111" stroke-width="1"/><circle cx="14.5" cy="13" r="3" fill="#111" stroke="#fff" stroke-width="1"/></svg>
<div class="abs" style="left:1019px;top:728px;width:1px;height:40px;background:#777"></div>

</body></html>
